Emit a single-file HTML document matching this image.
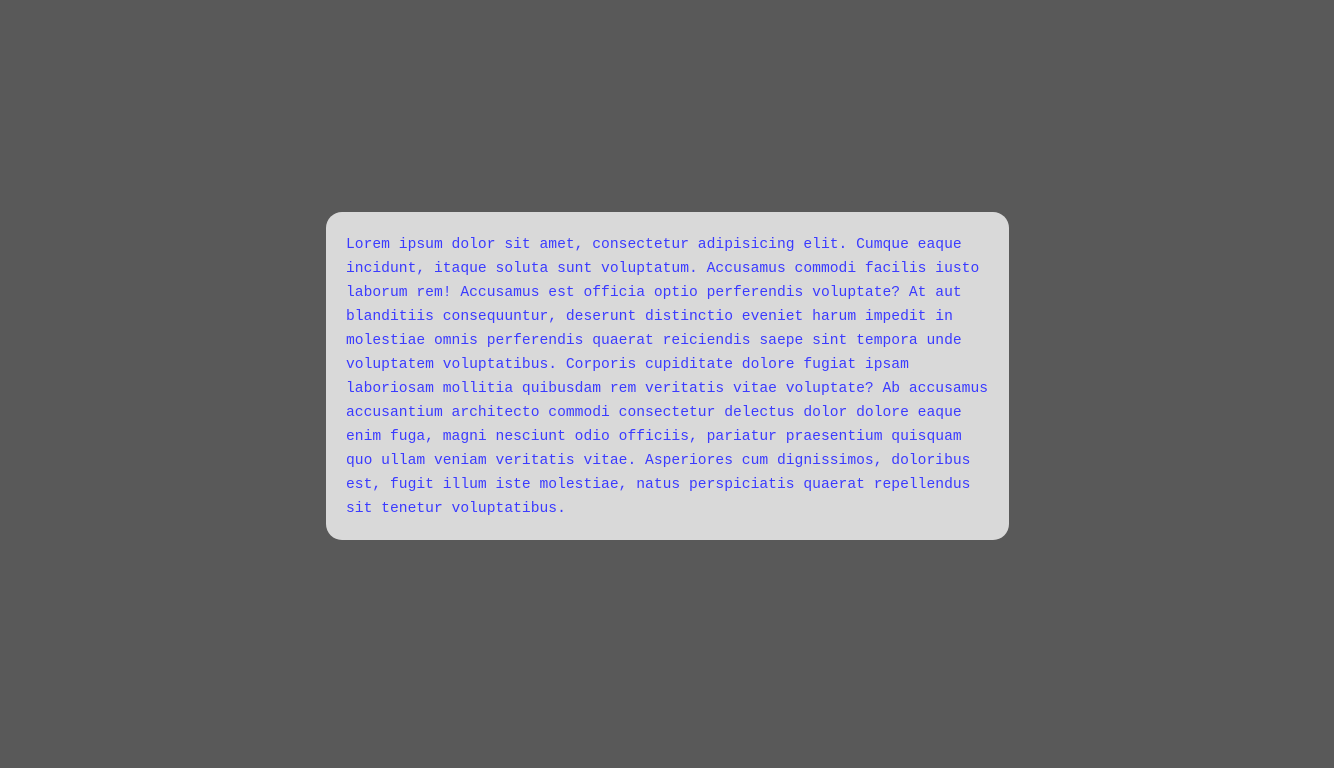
<!DOCTYPE html>
<html><head><meta charset="utf-8"><style>
html,body{margin:0;padding:0;background:#595959;width:1334px;height:768px;overflow:hidden}
.box{position:absolute;left:326px;top:212px;width:683px;height:328px;box-sizing:border-box;background:#d9d9d9;border-radius:16px;padding:21px 20px 0 20px}
p{margin:0;font-family:"Liberation Mono",monospace;font-size:14.66px;line-height:24px;color:#3b3bff;white-space:nowrap}
</style></head><body>
<div class="box"><p>Lorem ipsum dolor sit amet, consectetur adipisicing elit. Cumque eaque<br>
incidunt, itaque soluta sunt voluptatum. Accusamus commodi facilis iusto<br>
laborum rem! Accusamus est officia optio perferendis voluptate? At aut<br>
blanditiis consequuntur, deserunt distinctio eveniet harum impedit in<br>
molestiae omnis perferendis quaerat reiciendis saepe sint tempora unde<br>
voluptatem voluptatibus. Corporis cupiditate dolore fugiat ipsam<br>
laboriosam mollitia quibusdam rem veritatis vitae voluptate? Ab accusamus<br>
accusantium architecto commodi consectetur delectus dolor dolore eaque<br>
enim fuga, magni nesciunt odio officiis, pariatur praesentium quisquam<br>
quo ullam veniam veritatis vitae. Asperiores cum dignissimos, doloribus<br>
est, fugit illum iste molestiae, natus perspiciatis quaerat repellendus<br>
sit tenetur voluptatibus.</p></div>
</body></html>
